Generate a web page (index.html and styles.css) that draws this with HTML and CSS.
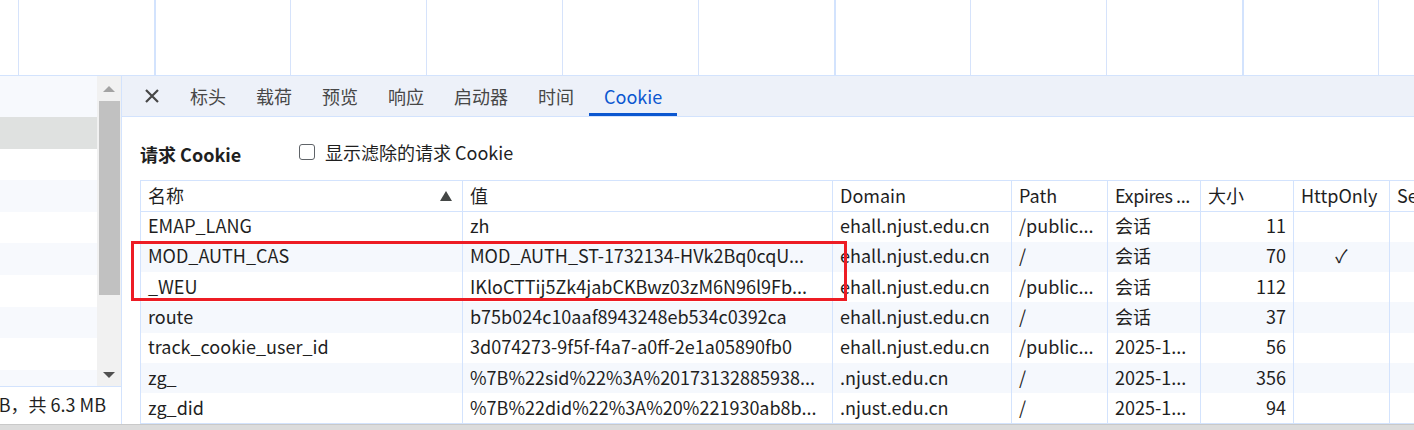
FILE: index.html
```html
<!DOCTYPE html>
<html lang="zh-CN">
<head>
<meta charset="utf-8">
<title>Cookie</title>
<link rel="stylesheet" href="styles.css">
</head>
<body>
<div class="page">
  <div class="waterfall">
    <div class="wf-lead"></div>
    <div class="wf-cell"></div>
    <div class="wf-cell thick"></div>
    <div class="wf-cell"></div>
    <div class="wf-cell"></div>
    <div class="wf-cell"></div>
    <div class="wf-cell"></div>
    <div class="wf-cell thick"></div>
    <div class="wf-cell"></div>
    <div class="wf-cell"></div>
    <div class="wf-cell thick"></div>
    <div class="wf-cell"></div>
  </div>

  <div class="main">
    <div class="left">
      <div class="list">
        <div class="list-rows">
          <div class="list-head"></div>
          <div class="list-row selected"></div>
          <div class="list-row"></div>
          <div class="list-row alt"></div>
          <div class="list-row"></div>
          <div class="list-row alt"></div>
          <div class="list-row"></div>
          <div class="list-row alt"></div>
          <div class="list-row"></div>
          <div class="list-row alt"></div>
        </div>
        <div class="vscroll">
          <div class="arrow up"></div>
          <div class="thumb"></div>
          <div class="track-rest"></div>
          <div class="arrow down"></div>
        </div>
      </div>
      <div class="status"><span class="status-text">已传输 12.8 kB，共 6.3 MB</span></div>
    </div>

    <div class="detail">
      <div class="tabs">
        <div class="close">
          <svg width="16" height="16" viewBox="0 0 16 16"><path d="M2 2 L14 14 M14 2 L2 14" stroke="#474747" stroke-width="2.2" fill="none"/></svg>
        </div>
        <div class="tab">标头</div>
        <div class="tab">载荷</div>
        <div class="tab">预览</div>
        <div class="tab">响应</div>
        <div class="tab">启动器</div>
        <div class="tab">时间</div>
        <div class="tab active">Cookie</div>
      </div>

      <div class="content">
        <div class="section-head">
          <div class="section-title">请求 Cookie</div>
          <label class="check">
            <span class="box"></span>
            <span class="check-label">显示滤除的请求 Cookie</span>
          </label>
        </div>

        <table class="cookies">
          <colgroup>
            <col class="c-name"><col class="c-value"><col class="c-domain"><col class="c-path"><col class="c-exp"><col class="c-size"><col class="c-http"><col class="c-sec">
          </colgroup>
          <thead>
            <tr>
              <th><div class="th-sort"><span>名称</span><span class="sort-arrow"></span></div></th>
              <th>值</th>
              <th>Domain</th>
              <th>Path</th>
              <th class="tight">Expires ...</th>
              <th>大小</th>
              <th>HttpOnly</th>
              <th>Se</th>
            </tr>
          </thead>
          <tbody>
            <tr>
              <td>EMAP_LANG</td><td>zh</td><td>ehall.njust.edu.cn</td><td>/public...</td><td>会话</td><td class="num">11</td><td class="mid"></td><td></td>
            </tr>
            <tr class="alt">
              <td>MOD_AUTH_CAS</td><td>MOD_AUTH_ST-1732134-HVk2Bq0cqU...</td><td>ehall.njust.edu.cn</td><td>/</td><td>会话</td><td class="num">70</td><td class="mid">✓</td><td></td>
            </tr>
            <tr>
              <td>_WEU</td><td>IKloCTTij5Zk4jabCKBwz03zM6N96l9Fb...</td><td>ehall.njust.edu.cn</td><td>/public...</td><td>会话</td><td class="num">112</td><td class="mid"></td><td></td>
            </tr>
            <tr class="alt">
              <td>route</td><td>b75b024c10aaf8943248eb534c0392ca</td><td>ehall.njust.edu.cn</td><td>/</td><td>会话</td><td class="num">37</td><td class="mid"></td><td></td>
            </tr>
            <tr>
              <td>track_cookie_user_id</td><td>3d074273-9f5f-f4a7-a0ff-2e1a05890fb0</td><td>ehall.njust.edu.cn</td><td>/public...</td><td>2025-1...</td><td class="num">56</td><td class="mid"></td><td></td>
            </tr>
            <tr class="alt">
              <td>zg_</td><td>%7B%22sid%22%3A%20173132885938...</td><td>.njust.edu.cn</td><td>/</td><td>2025-1...</td><td class="num">356</td><td class="mid"></td><td></td>
            </tr>
            <tr>
              <td>zg_did</td><td>%7B%22did%22%3A%20%221930ab8b...</td><td>.njust.edu.cn</td><td>/</td><td>2025-1...</td><td class="num">94</td><td class="mid"></td><td></td>
            </tr>
          </tbody>
        </table>

        <div class="redbox"></div>
      </div>
    </div>
  </div>
  <div class="hbar"></div>
</div>
</body>
</html>
```

FILE: styles.css
```css
* { box-sizing: border-box; }
html, body { margin: 0; padding: 0; }
body {
  width: 1414px;
  height: 430px;
  overflow: hidden;
  background: #ffffff;
  font-family: "Noto Sans CJK SC", "Noto Sans", sans-serif;
  font-size: 18px;
  color: #1f1f1f;
}
.page {
  display: flex;
  flex-direction: column;
  height: 430px;
  overflow: hidden;
}

/* waterfall grid */
.waterfall {
  height: 76px;
  flex: none;
  display: flex;
  border-bottom: 1px solid #d3e3fd;
  background: #fff;
  overflow: hidden;
}
.wf-lead { width: 18px; flex: none; }
.wf-cell {
  width: 136px;
  flex: none;
  border-left: 1px solid #d6e3fb;
}
.wf-cell.thick { border-left: 2px solid #d3e3fd; }

/* main area */
.main {
  flex: 1;
  display: flex;
  min-height: 0;
}
.left {
  width: 122px;
  flex: none;
  display: flex;
  flex-direction: column;
  border-right: 1px solid #d3e3fd;
}
.list {
  height: 311px;
  flex: none;
  display: flex;
  border-bottom: 1px solid #d3e3fd;
  overflow: hidden;
}
.list-rows {
  width: 97px;
  flex: none;
  display: flex;
  flex-direction: column;
}
.list-head {
  height: 41px;
  flex: none;
  background: #f7f9fd;
}
.list-row {
  height: 31.6px;
  flex: none;
  background: #ffffff;
}
.list-row.alt { background: #f7f9fd; }
.list-row.selected { background: #dfe1e0; }

.vscroll {
  width: 24px;
  flex: none;
  background: #f1f1f1;
  display: flex;
  flex-direction: column;
  align-items: center;
}
.arrow {
  width: 0;
  height: 0;
  border-left: 6px solid transparent;
  border-right: 6px solid transparent;
  flex: none;
}
.arrow.up {
  margin-top: 10px;
  border-bottom: 6px solid #a3a3a3;
}
.arrow.down {
  margin-bottom: 8px;
  border-top: 6px solid #505050;
}
.thumb {
  margin-top: 9px;
  width: 21px;
  height: 194px;
  background: #c1c1c1;
  flex: none;
}
.track-rest { flex: 1; }

.status {
  height: 37px;
  flex: none;
  display: flex;
  align-items: center;
  justify-content: flex-end;
  padding-right: 15px;
  padding-bottom: 4px;
  overflow: hidden;
  white-space: nowrap;
}
.status-text { flex: none; }

/* detail */
.detail {
  flex: 1;
  min-width: 0;
  display: flex;
  flex-direction: column;
  overflow: hidden;
}
.tabs {
  height: 41px;
  flex: none;
  display: flex;
  align-items: stretch;
  background: #edf1f9;
  border-bottom: 1px solid #d3e3fd;
}
.close {
  width: 53px;
  flex: none;
  display: flex;
  align-items: center;
  justify-content: center;
  padding-left: 7px;
}
.tab {
  padding: 0 15px;
  display: flex;
  align-items: center;
  color: #474747;
  border-bottom: 3px solid transparent;
  padding-top: 2px;
  white-space: nowrap;
}
.tab.active {
  color: #0b57d0;
  border-bottom-color: #0b57d0;
}

.content {
  position: relative;
  flex: 1;
  padding: 22px 0 0 18px;
}
.section-head {
  display: flex;
  align-items: center;
  height: 26px;
  margin-bottom: 15px;
}
.section-title {
  font-weight: 700;
  width: 159px;
  flex: none;
  padding-top: 3px;
}
.check {
  display: flex;
  align-items: center;
  gap: 10px;
}
.box {
  width: 16px;
  height: 16px;
  border: 1.6px solid #5f6368;
  border-radius: 3px;
  flex: none;
}
.check-label { white-space: nowrap; }

/* table */
.cookies {
  border-collapse: collapse;
  table-layout: fixed;
  width: 1349px;
  border: 1px solid #d3e3fd;
}
.c-name { width: 322px; }
.c-value { width: 370px; }
.c-domain { width: 179px; }
.c-path { width: 96px; }
.c-exp { width: 93px; }
.c-size { width: 93px; }
.c-http { width: 96px; }
.c-sec { width: 100px; }

.cookies th, .cookies td {
  padding: 0 7px 3px 7px;
  text-align: left;
  font-weight: 400;
  white-space: nowrap;
  overflow: hidden;
  text-overflow: clip;
  border-left: 1px solid #d3e3fd;
  vertical-align: middle;
}
.cookies th {
  height: 31px;
  border-bottom: 1px solid #d3e3fd;
  color: #1f1f1f;
}
.cookies th.tight {
  padding-right: 0;
  letter-spacing: -0.4px;
}
.cookies td { height: 30.3px; }
.cookies tr.alt td { background: #f5f8fd; }
.cookies td.num { text-align: right; }
.cookies td.mid { text-align: center; color: #1f1f1f; }

.th-sort {
  display: flex;
  align-items: center;
  justify-content: space-between;
  padding-right: 3px;
}
.sort-arrow {
  width: 0;
  height: 0;
  border-left: 6px solid transparent;
  border-right: 6px solid transparent;
  border-bottom: 10px solid #444746;
  margin-top: 3px;
}

.redbox {
  position: absolute;
  left: 9px;
  top: 124px;
  width: 716px;
  height: 60px;
  border: 3px solid #ed1c24;
  pointer-events: none;
}

.hbar {
  height: 6px;
  flex: none;
  margin-top: auto;
  background: #dcdcdc;
  border-top: 1px solid #c9c9c9;
}
```
